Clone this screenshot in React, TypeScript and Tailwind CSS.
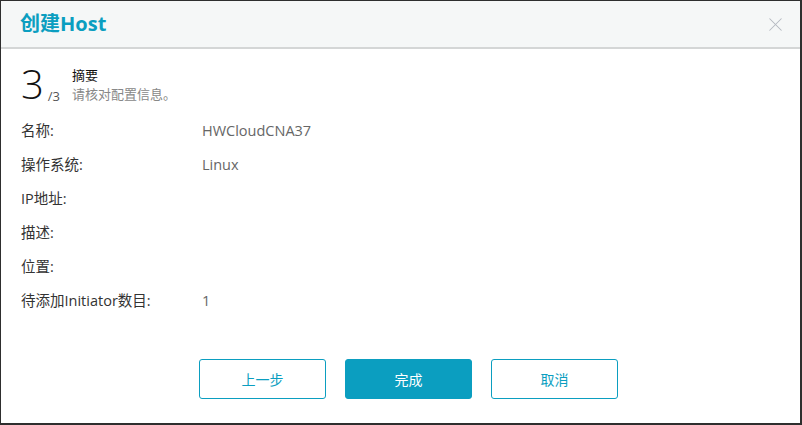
import { X } from "lucide-react";

const rows: [string, string][] = [
  ["名称:", "HWCloudCNA37"],
  ["操作系统:", "Linux"],
  ["IP地址:", ""],
  ["描述:", ""],
  ["位置:", ""],
  ["待添加Initiator数目:", "1"],
];

export default function App() {
  return (
    <div
      className="flex h-[425px] w-[802px] flex-col border-t border-l border-r-2 border-b-2 border-[#2e2e2e] bg-white"
      style={{ fontFamily: "'Open Sans', 'Noto Sans CJK SC', sans-serif" }}
    >
      {/* header */}
      <div className="flex h-[48px] shrink-0 items-center justify-between border-b-2 border-[#d4d6d6] bg-[#f5f7f7] pl-[19px] pr-[13px]">
        <h1 className="text-[20px] font-bold text-[#0b9ec0]">创建Host</h1>
        <X className="h-[23px] w-[23px] text-[#b4b9c0]" strokeWidth={1.1} />
      </div>

      {/* step */}
      <div className="mt-[15px] flex items-end pl-[20px]">
        <span className="text-[40px] font-light leading-[40px] text-[#111]">3</span>
        <span className="ml-[4px] text-[13px] leading-[16px] text-[#555]">/3</span>
        <div className="ml-[12px] flex flex-col">
          <span className="text-[13px] leading-[19px] text-[#111]">摘要</span>
          <span className="text-[13px] leading-[19px] text-[#888]">请核对配置信息。</span>
        </div>
      </div>

      {/* summary */}
      <div className="mt-[10px] flex flex-col pl-[20px]">
        {rows.map(([label, value]) => (
          <div key={label} className="flex h-[34px] items-center text-[14.5px]">
            <span className="w-[181px] text-[#333]">{label}</span>
            <span className="text-[#666]">{value}</span>
          </div>
        ))}
      </div>

      {/* actions */}
      <div className="mt-[41px] flex gap-[19px] pl-[198px]">
        <button className="h-[40px] w-[127px] rounded-[3px] border border-[#0b9ec0] bg-white text-[14px] text-[#0b9ec0]">
          上一步
        </button>
        <button className="h-[40px] w-[127px] rounded-[3px] border border-[#0b9ec0] bg-[#0b9ec0] text-[14px] text-white">
          完成
        </button>
        <button className="h-[40px] w-[127px] rounded-[3px] border border-[#0b9ec0] bg-white text-[14px] text-[#0b9ec0]">
          取消
        </button>
      </div>
    </div>
  );
}
